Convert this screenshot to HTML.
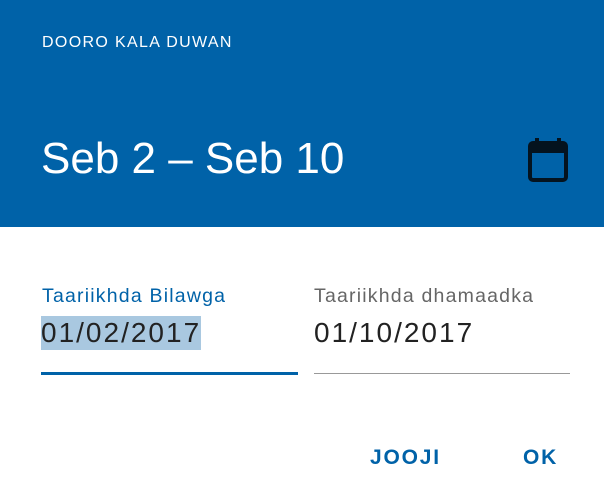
<html><head><style>
body{margin:0;width:604px;height:500px;background:#fff;font-family:"Liberation Sans",sans-serif;position:relative;overflow:hidden}
.h{position:absolute;left:0;top:0;width:604px;height:227px;background:#0062a8}
.t{position:absolute;left:42px;top:34px;color:#fff;font-size:16px;letter-spacing:1.35px}
.d{position:absolute;left:41px;top:133px;color:#fff;font-size:44px;line-height:52px}
.a{position:absolute;font-size:19.5px;top:285px;letter-spacing:1.2px}
.v{position:absolute;font-size:28px;top:316px;color:#222;line-height:34px;letter-spacing:2px}
.b{position:absolute;top:446px;font-size:21px;font-weight:bold;color:#0062a8;letter-spacing:1.8px}
</style></head><body>
<div class="h"></div>
<div class="t">DOORO KALA DUWAN</div>
<div class="d">Seb 2 – Seb 10</div>
<svg style="position:absolute;left:526px;top:137px" width="44" height="46" viewBox="0 0 44 46"><rect x="4" y="6" width="36" height="37" rx="3" fill="none" stroke="#04131f" stroke-width="4"/><rect x="4" y="6" width="36" height="10" fill="#04131f"/><rect x="9" y="1" width="4" height="8" fill="#04131f"/><rect x="31" y="1" width="4" height="8" fill="#04131f"/></svg>
<div class="a" style="left:42px;color:#0062a8">Taariikhda Bilawga</div>
<div class="v" style="left:41px;background:#a9c8e0;padding-right:0">01/02/2017</div>
<div style="position:absolute;left:41px;top:372px;width:257px;height:3px;background:#0062a8"></div>
<div class="a" style="left:314px;color:#666">Taariikhda dhamaadka</div>
<div class="v" style="left:314px">01/10/2017</div>
<div style="position:absolute;left:314px;top:373px;width:256px;height:1px;background:#999"></div>
<div class="b" style="left:370px">JOOJI</div>
<div class="b" style="left:523px">OK</div>
</body></html>
